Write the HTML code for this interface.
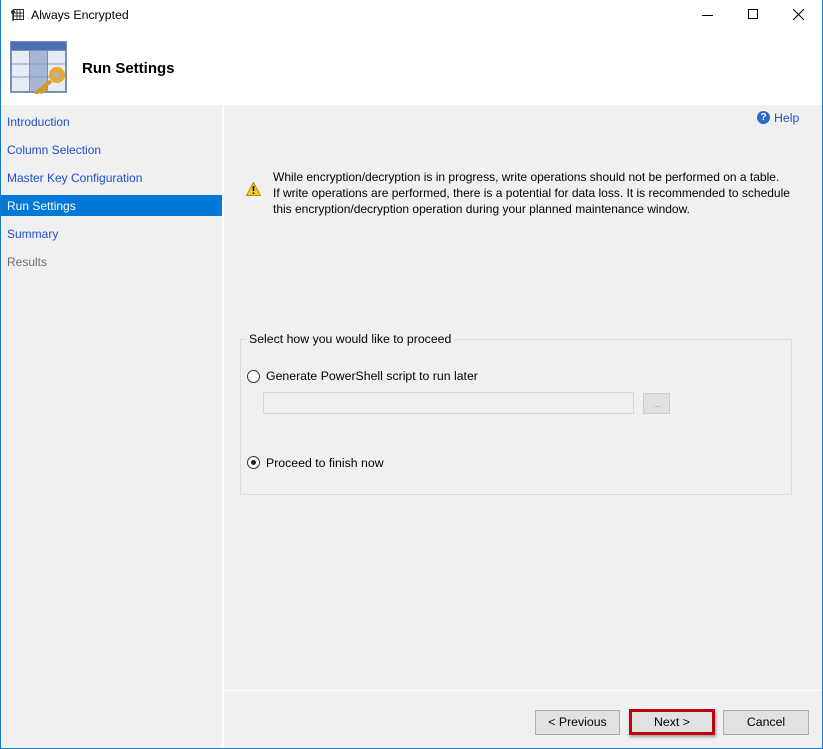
<!DOCTYPE html>
<html><head><style>
*{margin:0;padding:0;box-sizing:border-box}
body{width:823px;height:749px;overflow:hidden;font-family:"Liberation Sans",sans-serif;font-size:12px;color:#000;background:#fff;position:relative}
.abs{position:absolute}
.win{position:absolute;left:0;top:0;width:823px;height:749px;border:1px solid #1979ca;border-top:none}
.nav a{position:absolute;left:7px;color:#1e50c8;font-size:12px;text-decoration:none}
.btn{position:absolute;top:710px;height:25px;background:#e1e1e1;border:1px solid #adadad;text-align:center;line-height:23px;font-size:12.3px}
</style></head><body>
<div class="abs" style="left:0;top:105px;width:222px;height:644px;background:#f0f0f0"></div>
<div class="abs" style="left:224px;top:105px;width:599px;height:644px;background:#f0f0f0"></div>
<div class="abs" style="left:224px;top:690px;width:599px;height:1px;background:#fff"></div>
<div class="win"></div>
<svg class="abs" style="left:10px;top:8px" width="14" height="14" viewBox="0 0 14 14"><rect x="3.5" y="1.5" width="10" height="10" fill="none" stroke="#333"/><path d="M3.5 5h10M3.5 8h10M7 1.5v10M10 1.5v10" stroke="#333"/><circle cx="3" cy="4" r="2" fill="#333"/><path d="M3 5v8" stroke="#333" stroke-width="1.5"/></svg>
<div class="abs" style="left:31px;top:8px;font-size:12.3px">Always Encrypted</div>
<div class="abs" style="left:702px;top:15px;width:11px;height:1px;background:#000"></div>
<div class="abs" style="left:748px;top:9px;width:10px;height:10px;border:1px solid #000"></div>
<svg class="abs" style="left:793px;top:9px" width="11" height="11"><path d="M0 0L11 11M11 0L0 11" stroke="#000"/></svg>
<svg class="abs" style="left:10px;top:41px" width="58" height="53" viewBox="0 0 58 53"><rect x="0" y="0" width="57" height="52" fill="#7b8db8"/><rect x="1" y="1" width="55" height="8" fill="#4a6fb5"/><rect x="2" y="10" width="17" height="40" fill="#e6ecf4"/><rect x="20" y="10" width="17" height="40" fill="#a7b5d6"/><rect x="38" y="10" width="17" height="40" fill="#e6ecf4"/><path d="M2 23h53M2 36h53" stroke="#8a9ac0"/><circle cx="47" cy="34" r="8" fill="#e5a92f"/><circle cx="47" cy="34" r="3" fill="#a7b5d6"/><path d="M41 40L25 53M30 49l3 3M34 46l3 3" stroke="#d09a25" stroke-width="4"/></svg>
<div class="abs" style="left:82px;top:60px;font-size:15px;font-weight:bold">Run Settings</div>
<div class="nav">
<a style="top:115px">Introduction</a>
<a style="top:143px">Column Selection</a>
<a style="top:171px">Master Key Configuration</a>
<a style="top:227px;color:#1e50c8">Summary</a>
<a style="top:255px;color:#6d6d6d">Results</a>
</div>
<div class="abs" style="left:1px;top:195px;width:221px;height:21px;background:#0078d7"></div>
<div class="abs" style="left:7px;top:199px;color:#fff;font-size:12px">Run Settings</div>
<div class="abs" style="left:757px;top:111px;width:13px;height:13px;border-radius:50%;background:#2e6ac8;color:#fff;font-size:10px;font-weight:bold;text-align:center;line-height:13px">?</div>
<div class="abs" style="left:774px;top:111px;color:#1e50c8;font-size:12.3px">Help</div>
<svg class="abs" style="left:246px;top:182px" width="15" height="14"><path d="M7.5 0.5L14.5 13.5H0.5Z" fill="#f3cd2b" stroke="#b98e00"/><path d="M7.5 4v5M7.5 10.5v1.5" stroke="#000" stroke-width="1.6"/></svg>
<div class="abs" style="left:273px;top:169px;font-size:12px;line-height:16px;width:540px">While encryption/decryption is in progress, write operations should not be performed on a table.<br>If write operations are performed, there is a potential for data loss. It is recommended to schedule<br>this encryption/decryption operation during your planned maintenance window.</div>
<div class="abs" style="left:240px;top:339px;width:552px;height:156px;border:1px solid #dcdcdc"></div>
<div class="abs" style="left:246px;top:332px;background:#f0f0f0;padding:0 3px;font-size:12.3px">Select how you would like to proceed</div>
<div class="abs" style="left:247px;top:370px;width:13px;height:13px;border-radius:50%;border:1px solid #333;background:#fff"></div>
<div class="abs" style="left:266px;top:369px;font-size:12.3px">Generate PowerShell script to run later</div>
<div class="abs" style="left:263px;top:392px;width:371px;height:22px;border:1px solid #d6d6d6;background:#f0f0f0"></div>
<div class="abs" style="left:643px;top:393px;width:27px;height:21px;border:1px solid #cccccc;background:#e0e0e0;color:#999;font-size:9px;text-align:center;line-height:20px">...</div>
<div class="abs" style="left:247px;top:456px;width:13px;height:13px;border-radius:50%;border:1px solid #333;background:#fff"></div>
<div class="abs" style="left:251px;top:460px;width:5px;height:5px;border-radius:50%;background:#222"></div>
<div class="abs" style="left:266px;top:456px;font-size:12.3px">Proceed to finish now</div>
<div class="btn" style="left:535px;width:85px">&lt; Previous</div>
<div class="btn" style="left:629px;width:86px;height:26px;top:709px;border:3px solid #c0000c;box-shadow:1px 2px 3px rgba(0,0,0,.35);line-height:20px">Next &gt;</div>
<div class="btn" style="left:723px;width:86px">Cancel</div>
</body></html>
